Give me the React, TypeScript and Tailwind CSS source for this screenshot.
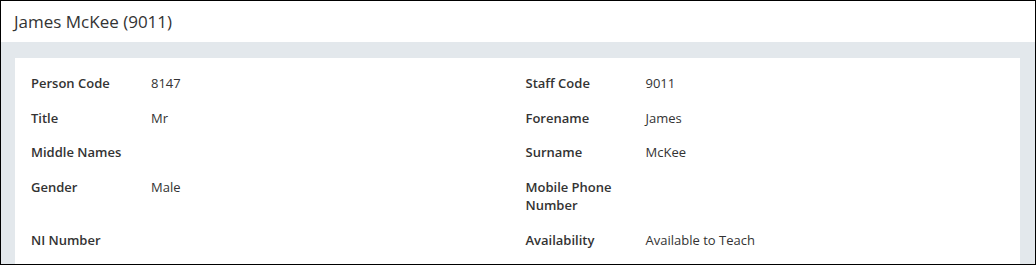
import React from 'react';

interface Field {
  label: string;
  value?: string;
}

const leftFields: Field[] = [
  { label: 'Person Code', value: '8147' },
  { label: 'Title', value: 'Mr' },
  { label: 'Middle Names' },
  { label: 'Gender', value: 'Male' },
  { label: 'NI Number' },
];

const rightFields: Field[] = [
  { label: 'Staff Code', value: '9011' },
  { label: 'Forename', value: 'James' },
  { label: 'Surname', value: 'McKee' },
  { label: 'Mobile Phone Number' },
  { label: 'Availability', value: 'Available to Teach' },
];

function FieldRow({ field }: { field: Field }) {
  return (
    <div className="flex py-2">
      <div className="w-[120px] shrink-0 pr-3 font-semibold">{field.label}</div>
      <div className="flex-1">{field.value}</div>
    </div>
  );
}

export default function App() {
  const rows = leftFields.map((f, i) => [f, rightFields[i]] as const);

  return (
    <div
      className="w-[1036px] h-[265px] border border-black bg-[#e3e8ec] overflow-hidden flex flex-col text-[#333]"
      style={{ fontFamily: '"Open Sans", "Liberation Sans", sans-serif' }}
    >
      <div className="h-[41px] shrink-0 bg-white flex items-center px-[13px]">
        <h1 className="text-[17px] leading-none">James McKee (9011)</h1>
      </div>

      <div className="flex-1 pt-4 pl-[14px] pr-[15px]">
        <div className="bg-white h-full px-2 pt-2 text-[13px] leading-[1.42857]">
          <div className="grid grid-cols-2">
            {rows.map(([l, r]) => (
              <React.Fragment key={l.label}>
                <div className="px-2">
                  <FieldRow field={l} />
                </div>
                <div className="px-2">
                  <FieldRow field={r} />
                </div>
              </React.Fragment>
            ))}
          </div>
        </div>
      </div>
    </div>
  );
}
